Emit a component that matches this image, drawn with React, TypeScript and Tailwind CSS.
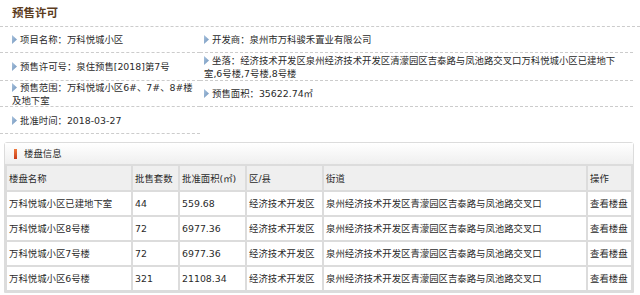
import React from 'react';

const FONT = "font-['DejaVu_Sans','Noto_Sans_CJK_SC',sans-serif]";

const ROWS = [
  { name: '万科悦城小区已建地下室', count: '44', area: '559.68' },
  { name: '万科悦城小区8号楼', count: '72', area: '6977.36' },
  { name: '万科悦城小区7号楼', count: '72', area: '6977.36' },
  { name: '万科悦城小区6号楼', count: '321', area: '21108.34' },
];

const STREET = '泉州经济技术开发区青濛园区吉泰路与凤池路交叉口';

function Arrow() {
  return (
    <svg width="5" height="9" viewBox="0 0 5 9" className="inline-block mr-[3px] align-[-1px]">
      <defs>
        <linearGradient id="tri" x1="0" y1="0" x2="1" y2="1">
          <stop offset="0" stopColor="#a9c3de" />
          <stop offset="1" stopColor="#6f93bb" />
        </linearGradient>
      </defs>
      <path d="M0 0 L5 4.5 L0 9 Z" fill="url(#tri)" />
    </svg>
  );
}

export default function App() {
  const cell = 'border-2 border-[#dcdcdc] px-[2px] text-left font-normal whitespace-nowrap overflow-hidden';
  return (
    <div className={`w-[640px] h-[295px] bg-white text-[#2a2a2a] text-[9.4px] leading-[13px] overflow-hidden ${FONT}`}>
      <div className="h-[26px] flex items-center pl-3">
        <span className="text-[11.5px] font-bold text-[#5c3d1e]">预售许可</span>
      </div>

      <div className="grid grid-cols-[200px_433px] border-t border-dashed border-[#cccccc]">
        <div className="h-[26px] flex items-center pl-3 border-b border-dashed border-[#cccccc]">
          <span><Arrow />项目名称：万科悦城小区</span>
        </div>
        <div className="h-[26px] flex items-center pl-1 border-b border-dashed border-[#cccccc]">
          <span><Arrow />开发商：泉州市万科骏禾置业有限公司</span>
        </div>

        <div className="h-[28px] flex items-center pl-3 border-b border-dashed border-[#cccccc]">
          <span><Arrow />预售许可号：泉住预售[2018]第7号</span>
        </div>
        <div className="h-[28px] flex items-center pl-1 border-b border-dashed border-[#cccccc]">
          <span>
            <Arrow />坐落：经济技术开发区泉州经济技术开发区清濛园区吉泰路与凤池路交叉口万科悦城小区已建地下
            <br />
            室,6号楼,7号楼,8号楼
          </span>
        </div>

        <div className="h-[26px] flex items-center pl-3 border-b border-dashed border-[#cccccc]">
          <span>
            <Arrow />预售范围：万科悦城小区6#、7#、8#楼
            <br />
            及地下室
          </span>
        </div>
        <div className="h-[26px] flex items-center pl-1 border-b border-dashed border-[#cccccc]">
          <span><Arrow />预售面积：35622.74㎡</span>
        </div>

        <div className="h-[27px] flex items-center pl-3 border-b border-dashed border-[#cccccc]">
          <span><Arrow />批准时间：2018-03-27</span>
        </div>
        <div />
      </div>

      <div className="mt-2 ml-1 w-[630px] border border-[#dcdcdc] rounded-t-[3px]">
        <div className="h-[21px] flex items-center gap-[7px] pl-[9px] bg-gradient-to-b from-white to-[#efefef]">
          <span className="w-[3px] h-[10px] bg-gradient-to-b from-[#f07a3c] to-[#c9391a]" />
          <span>楼盘信息</span>
        </div>
        <table className="w-full table-fixed">
          <colgroup>
            <col className="w-[126px]" />
            <col className="w-[47px]" />
            <col className="w-[67px]" />
            <col className="w-[77px]" />
            <col className="w-[264px]" />
            <col />
          </colgroup>
          <thead>
            <tr className="h-[26px] bg-[#efefef]">
              <th className={cell}>楼盘名称</th>
              <th className={cell}>批售套数</th>
              <th className={cell}>批准面积(㎡)</th>
              <th className={cell}>区/县</th>
              <th className={cell}>街道</th>
              <th className={cell}>操作</th>
            </tr>
          </thead>
          <tbody>
            {ROWS.map((r) => (
              <tr key={r.name} className="h-[25px]">
                <td className={cell}>{r.name}</td>
                <td className={cell}>{r.count}</td>
                <td className={cell}>{r.area}</td>
                <td className={cell}>经济技术开发区</td>
                <td className={cell}>{STREET}</td>
                <td className={cell}>查看楼盘</td>
              </tr>
            ))}
          </tbody>
        </table>
      </div>
    </div>
  );
}
